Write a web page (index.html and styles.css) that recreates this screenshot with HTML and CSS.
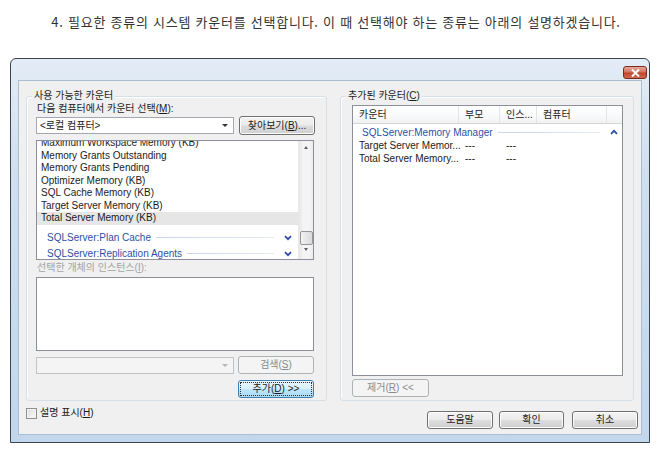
FILE: index.html
```html
<!DOCTYPE html>
<html lang="ko">
<head>
<meta charset="utf-8">
<link rel="stylesheet" href="styles.css">
</head>
<body>
<p class="caption">4. 필요한 종류의 시스템 카운터를 선택합니다. 이 때 선택해야 하는 종류는 아래의 설명하겠습니다.</p>
<div class="window">
  <div class="titlebar">
    <span class="close"><svg width="11" height="8" viewBox="0 0 11 8"><path d="M2 0.5 L9 7.5 M9 0.5 L2 7.5" stroke="#fff" stroke-width="2" fill="none"/></svg></span>
  </div>
  <div class="client">
    <div class="groups">
      <div class="group gleft">
        <span class="legend">사용 가능한 카운터</span>
        <div class="lbl">다음 컴퓨터에서 카운터 선택(<u>M</u>):</div>
        <div class="row r1">
          <div class="combo c1"><span>&lt;로컬 컴퓨터&gt;</span><i class="arr"></i></div>
          <div class="btn b1">찾아보기(<u>B</u>)...</div>
        </div>
        <div class="listbox lb1">
          <div class="items">
            <div class="it">Maximum Workspace Memory (KB)</div>
            <div class="it">Memory Grants Outstanding</div>
            <div class="it">Memory Grants Pending</div>
            <div class="it">Optimizer Memory (KB)</div>
            <div class="it">SQL Cache Memory (KB)</div>
            <div class="it">Target Server Memory (KB)</div>
            <div class="it sel">Total Server Memory (KB)</div>
            <div class="gh"><span>SQLServer:Plan Cache</span><b class="ln"></b><svg class="chev" width="8" height="6" viewBox="0 0 8 6"><path d="M1 1.2 L4 4.2 L7 1.2" stroke="#2b4da5" stroke-width="1.8" fill="none"/></svg></div>
            <div class="gh"><span>SQLServer:Replication Agents</span><b class="ln"></b><svg class="chev" width="8" height="6" viewBox="0 0 8 6"><path d="M1 1.2 L4 4.2 L7 1.2" stroke="#2b4da5" stroke-width="1.8" fill="none"/></svg></div>
          </div>
          <div class="vscroll">
            <span class="sarr up"></span>
            <span class="thumb"></span>
            <span class="sarr dn"></span>
          </div>
        </div>
        <div class="lbl dis">선택한 개체의 인스턴스(<u>I</u>):</div>
        <div class="listbox lb2"></div>
        <div class="row r3">
          <div class="combo c2 disc"><span></span><i class="arr darr"></i></div>
          <div class="btn b2 disb">검색(<u>S</u>)</div>
        </div>
        <div class="row r4">
          <div class="btn b3 focus"><span class="fr"><span>추가(<u>D</u>) &gt;&gt;</span></span></div>
        </div>
      </div>
      <div class="group gright">
        <span class="legend">추가된 카운터(<u>C</u>)</span>
        <div class="listview">
          <div class="hdr">
            <span class="hc h1">카운터</span>
            <span class="hc h2">부모</span>
            <span class="hc h3">인스...</span>
            <span class="hc h4">컴퓨터</span>
            <span class="hc h5"></span>
          </div>
          <div class="gh gh2"><span>SQLServer:Memory Manager</span><b class="ln"></b><svg class="chev" width="8" height="6" viewBox="0 0 8 6"><path d="M1 4.8 L4 1.8 L7 4.8" stroke="#2b4da5" stroke-width="1.8" fill="none"/></svg></div>
          <div class="lr"><span class="c1c">Target Server Memor...</span><span class="c2c">---</span><span class="c3c">---</span></div>
          <div class="lr"><span class="c1c">Total Server Memory...</span><span class="c2c">---</span><span class="c3c">---</span></div>
        </div>
        <div class="row r5">
          <div class="btn b4 disb">제거(<u>R</u>) &lt;&lt;</div>
        </div>
      </div>
    </div>
    <div class="bottom">
      <label class="chk"><span class="box"></span><span>설명 표시(<u>H</u>)</span></label>
      <div class="btns">
        <div class="btn bb">도움말</div>
        <div class="btn bb ok">확인</div>
        <div class="btn bb cancel">취소</div>
      </div>
    </div>
  </div>
</div>
</body>
</html>
```
FILE: styles.css
```css
* { box-sizing: border-box; }
body {
  margin: 0;
  width: 658px;
  height: 456px;
  overflow: hidden;
  background: #fff;
  font-family: "Liberation Sans", "Noto Sans CJK KR", sans-serif;
  font-size: 10px;
  color: #1b1b1b;
}
u { text-decoration: underline; text-underline-offset: 1px; }
.caption {
  margin: 0;
  height: 58px;
  padding: 14px 0 0 14px;
  text-align: center;
  font-family: "Noto Sans CJK KR", sans-serif;
  font-size: 13px;
  letter-spacing: 0.75px;
  line-height: 16px;
  color: #333;
}
.window {
  margin-left: 10px;
  width: 640px;
  height: 385px;
  border: 1px solid #3b4450;
  border-radius: 6px 6px 0 0;
  background: linear-gradient(#e3ecf6, #cfdfee 30%, #c2d6ec);
  padding: 0 7px 7px 7px;
  display: flex;
  flex-direction: column;
}
.titlebar {
  height: 21px;
  display: flex;
  justify-content: flex-end;
  align-items: flex-start;
}
.close {
  margin-top: 7px;
  margin-right: -5px;
  width: 24px;
  height: 13px;
  border: 1px solid #7b2a1e;
  border-radius: 3px;
  background: linear-gradient(#e9a99b, #d4735f 45%, #c0442c 55%, #cf6a4f);
  display: flex;
  align-items: center;
  justify-content: center;
}
.client {
  flex: 1;
  background: #f0f0f0;
  border: 1px solid #a9bdd3;
  display: flex;
  flex-direction: column;
}
.groups {
  display: flex;
  gap: 13px;
  padding: 15px 0 0 7px;
}
.group {
  position: relative;
  height: 305px;
  border: 1px solid #d5dfe5;
  border-radius: 3px;
  box-shadow: inset 1px 1px 0 #fff;
}
.gleft { width: 301px; padding: 6px 0 0 9px; }
.gright { width: 294px; padding: 8px 0 0 11px; }
.legend {
  position: absolute;
  top: -7px;
  left: 5px;
  padding: 0 2px;
  line-height: 12px;
  background: #f0f0f0;
}
.lbl { line-height: 12px; padding-left: 1px; }
.dis { color: #a3a3a3; margin-top: 2px; }
.row { display: flex; align-items: center; }
.r1 { margin-top: 1px; gap: 5px; height: 19px; }
.combo {
  height: 17px;
  border: 1px solid #a4a9b1;
  background: #fff;
  display: flex;
  align-items: center;
  padding-left: 3px;
  position: relative;
}
.c1 { width: 198px; }
.combo span { flex: 1; line-height: 14px; }
.arr {
  width: 0; height: 0;
  border-left: 3px solid transparent;
  border-right: 3px solid transparent;
  border-top: 3px solid #333;
  margin-right: 5px;
}
.darr { border-top-color: #b5b5b5; }
.btn {
  height: 19px;
  border: 1px solid #707070;
  border-radius: 3px;
  background: linear-gradient(#f3f3f3, #ebebeb 48%, #dddddd 52%, #cfcfcf);
  box-shadow: inset 0 0 0 1px #fcfcfc;
  display: flex;
  align-items: center;
  justify-content: center;
  line-height: 12px;
}
.b1 { width: 76px; }
.disb {
  border-color: #adb2b5;
  background: #f4f4f4;
  box-shadow: none;
  color: #8a8a8a;
}
.listbox {
  border: 1px solid #8a8f98;
  background: #fff;
  width: 278px;
}
.lb1 {
  margin-top: 5px;
  height: 120px;
  overflow: hidden;
  display: flex;
}
.items { flex: 1; margin-top: -4px; }
.it { height: 12.5px; line-height: 12.5px; padding-left: 4px; white-space: nowrap; }
.sel { background: #e6e6e6; }
.gh {
  height: 16px;
  display: flex;
  align-items: center;
  padding-left: 10px;
  color: #2d50a6;
  margin-top: 5px;
}
.gh + .gh { margin-top: 0; }
.gh span { white-space: nowrap; }
.ln {
  flex: 1;
  height: 1px;
  margin: 0 10px 0 5px;
  background: linear-gradient(90deg, #c9d5ea, #e3e9f3);
}
.chev { margin-right: 6px; }
.vscroll {
  width: 15px;
  background: linear-gradient(90deg, #e6e6e6, #f4f4f4 30%, #f4f4f4 70%, #ececec);
  border-left: 1px solid #e8e8e8;
  display: flex;
  flex-direction: column;
  align-items: center;
  padding-top: 5px;
}
.sarr {
  width: 0; height: 0;
  border-left: 2.5px solid transparent;
  border-right: 2.5px solid transparent;
}
.up { border-bottom: 3px solid #606060; }
.dn { border-top: 3px solid #606060; margin-top: 3px; }
.thumb {
  margin-top: 82px;
  width: 13px;
  height: 14px;
  border: 1px solid #979797;
  border-radius: 2px;
  background: linear-gradient(90deg, #f3f3f3, #e6e6e6 50%, #dadada);
}
.lb2 { margin-top: 3px; height: 74px; }
.r3 { margin-top: 5px; gap: 4px; height: 18px; }
.c2 { width: 198px; }
.disc { border-color: #c0c3c7; background: #f4f4f4; }
.b2 { width: 76px; height: 18px; }
.r4 { margin-top: 6px; justify-content: flex-end; width: 278px; }
.b3 { width: 76px; height: 18px; }
.focus {
  border-color: #3c7fb1;
  background: linear-gradient(#eaf6fd, #d9f0fc 48%, #bee6fd 52%, #a7d9f5);
  padding: 1px;
  box-shadow: none;
}
.fr {
  flex: 1;
  align-self: stretch;
  border: 1px dotted #333;
  display: flex;
  align-items: center;
  justify-content: center;
}
.listview {
  width: 271px;
  height: 271px;
  border: 1px solid #8a8f98;
  background: #fff;
}
.hdr {
  display: flex;
  height: 18px;
  background: linear-gradient(#ffffff, #fafbfc 50%, #f1f2f4);
  border-bottom: 1px solid #d5d5d5;
}
.hc {
  line-height: 17px;
  padding-left: 6px;
  border-right: 1px solid #e3e4e6;
  white-space: nowrap;
}
.h1 { width: 106px; }
.h2 { width: 41px; }
.h3 { width: 37px; }
.h4 { width: 70px; }
.h5 { flex: 1; border-right: 0; }
.gh2 { margin-top: 1px; padding-left: 9px; height: 14px; }
.gh2 .ln { margin-right: 10px; }
.gh2 .chev { margin-right: 4px; }
.lr { display: flex; height: 13px; line-height: 13px; white-space: nowrap; }
.c1c { width: 112px; padding-left: 6px; overflow: hidden; }
.c2c { width: 41px; }
.c3c { width: 40px; }
.r5 { margin-top: 3px; }
.b4 { width: 77px; height: 18px; }
.bottom {
  display: flex;
  align-items: flex-start;
  justify-content: space-between;
  padding: 0 3px 0 7px;
}
.chk {
  margin-top: 6px;
  display: flex;
  align-items: center;
  gap: 3px;
  line-height: 12px;
}
.box {
  width: 11px;
  height: 11px;
  border: 1px solid #8e8f8f;
  background: linear-gradient(135deg, #dcdcdc, #fbfbfb);
  box-shadow: inset 0 0 0 1px #f4f4f4;
}
.btns { display: flex; margin-top: 10px; }
.bb { width: 66px; height: 18px; }
.ok { margin-left: 6px; width: 65px; }
.cancel { margin-left: 8px; }
```
